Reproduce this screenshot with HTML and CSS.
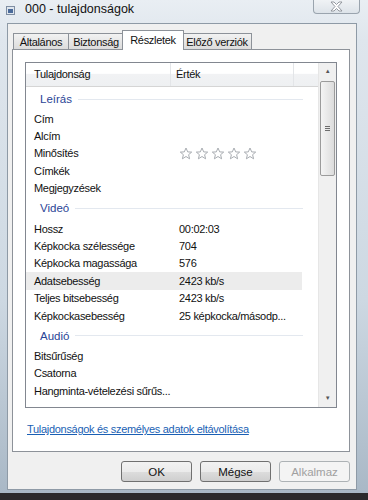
FILE: index.html
```html
<!DOCTYPE html>
<html lang="hu">
<head>
    <meta charset="UTF-8">
    <title>000 - tulajdonságok</title>
    <link rel="stylesheet" href="styles.css">
</head>
<body>
<div class="window">
    <!-- title bar -->
    <div class="titlebar">
        <svg class="appicon" width="9" height="9" viewBox="0 0 9 9">
            <rect x="0.5" y="0.5" width="8" height="8" fill="#dfe6ee" stroke="#7f8ea3"/>
            <rect x="2" y="3" width="5" height="4" fill="#4a6a9a"/>
        </svg>
        <span class="title">000 - tulajdonságok</span>
        <div class="close">
            <svg width="13" height="11" viewBox="0 0 13 11">
                <path d="M1 1 L4 1 L6.5 3.5 L9 1 L12 1 L8 5.5 L12 10 L9 10 L6.5 7.5 L4 10 L1 10 L5 5.5 Z" fill="#fff" stroke="#8a8f96" stroke-width="0.9"/>
            </svg>
        </div>
    </div>

    <div class="client">
        <!-- tabs -->
        <div class="tabs">
            <div class="tab t1">Általános</div>
            <div class="tab t2">Biztonság</div>
            <div class="tab t3 active">Részletek</div>
            <div class="tab t4">Előző verziók</div>
        </div>

        <div class="page">
            <div class="listview">
                <div class="listbody">
                    <div class="header">
                        <div class="hcol name">Tulajdonság</div>
                        <div class="hcol value">Érték</div>
                        <div class="hcol rest"></div>
                    </div>
                    <div class="rows">
                        <div class="group first"><span>Leírás</span></div>
                        <div class="row"><span class="name">Cím</span></div>
                        <div class="row"><span class="name">Alcím</span></div>
                        <div class="row"><span class="name">Minősítés</span>
                            <span class="value stars">
                                <svg width="82" height="13" viewBox="0 0 82 13">
                                    <g fill="#fff" stroke="#a9adb2" stroke-width="1">
                                        <path id="st" d="M7 1 L8.7 4.9 L12.7 5.1 L9.6 7.7 L10.6 11.8 L7 9.5 L3.4 11.8 L4.4 7.7 L1.3 5.1 L5.3 4.9 Z"/>
                                        <use href="#st" x="16"/>
                                        <use href="#st" x="32"/>
                                        <use href="#st" x="48"/>
                                        <use href="#st" x="64"/>
                                    </g>
                                </svg>
                            </span>
                        </div>
                        <div class="row"><span class="name">Címkék</span></div>
                        <div class="row"><span class="name">Megjegyzések</span></div>

                        <div class="group"><span>Videó</span></div>
                        <div class="row"><span class="name">Hossz</span><span class="value">00:02:03</span></div>
                        <div class="row"><span class="name">Képkocka szélessége</span><span class="value">704</span></div>
                        <div class="row"><span class="name">Képkocka magassága</span><span class="value">576</span></div>
                        <div class="row hot"><span class="name">Adatsebesség</span><span class="value">2423 kb/s</span></div>
                        <div class="row"><span class="name">Teljes bitsebesség</span><span class="value">2423 kb/s</span></div>
                        <div class="row"><span class="name">Képkockasebesség</span><span class="value">25 képkocka/másodp...</span></div>

                        <div class="group"><span>Audió</span></div>
                        <div class="row"><span class="name">Bitsűrűség</span></div>
                        <div class="row"><span class="name">Csatorna</span></div>
                        <div class="row"><span class="name">Hangminta-vételezési sűrűs...</span></div>
                    </div>
                </div>
                <div class="scrollbar">
                    <div class="arrow">&#9650;</div>
                    <div class="track">
                        <div class="thumb"><span class="grip"></span></div>
                    </div>
                    <div class="arrow">&#9660;</div>
                </div>
            </div>
            <a class="remove" href="#">Tulajdonságok és személyes adatok eltávolítása</a>
        </div>

        <div class="buttons">
            <button>OK</button>
            <button>Mégse</button>
            <button disabled>Alkalmaz</button>
        </div>
    </div>
</div>
</body>
</html>
```

FILE: styles.css
```css
body {
    margin: 0;
    font-family: "Liberation Sans", Arial, sans-serif;
    font-size: 11px;
    letter-spacing: -0.3px;
    background: #2b2a2c;
}

.window {
    width: 368px;
    height: 493px;
    box-sizing: border-box;
    padding: 0 11px 3px 7px;
    display: flex;
    flex-direction: column;
    background: linear-gradient(to bottom, #e9eef3 0px, #dfe6ed 40px, #cdd8e2 300px, #a9b8c6 493px);
}

/* title bar */
.titlebar {
    height: 23px;
    flex-shrink: 0;
    display: flex;
    align-items: flex-start;
    position: relative;
}
.appicon {
    margin: 6px 0 0 -1px;
}
.title {
    margin: 2px 0 0 10px;
    font-size: 12.5px;
    letter-spacing: 0;
    color: #111;
}
.close {
    position: absolute;
    right: -3px;
    top: -3px;
    width: 47px;
    height: 17px;
    box-sizing: border-box;
    border: 1px solid #9aa4ae;
    border-top: none;
    border-radius: 0 0 4px 4px;
    background: linear-gradient(to bottom, #f4f6f8, #dde3e9);
    display: flex;
    justify-content: center;
    align-items: center;
    padding-top: 2px;
}

/* client area */
.client {
    flex: 1;
    background: #f0f0f0;
    border: 1px solid #8e9aa6;
    display: flex;
    flex-direction: column;
    padding: 6px 6px 0 4px;
}

.tabs {
    display: flex;
    align-items: flex-end;
    height: 19px;
    margin-left: 1px;
    position: relative;
    z-index: 1;
}
.tab {
    height: 16px;
    line-height: 16px;
    box-sizing: border-box;
    text-align: center;
    border: 1px solid #8d9299;
    border-bottom: none;
    margin-right: -1px;
    background: linear-gradient(to bottom, #f2f2f2, #dcdcdc);
    color: #111;
}
.t1 { width: 56px; }
.t2 { width: 56px; }
.t3 { width: 62px; }
.t4 { width: 70px; }
.tab.active {
    height: 20px;
    line-height: 18px;
    margin: 0 -2px 0 -1px;
    background: #fff;
    position: relative;
    top: 1px;
}

.page {
    height: 403px;
    box-sizing: border-box;
    background: #fff;
    border: 1px solid #8d9299;
    padding: 12px 12px 0 12px;
    display: flex;
    flex-direction: column;
}

/* list view */
.listview {
    height: 346px;
    flex-shrink: 0;
    box-sizing: border-box;
    border: 1px solid #828790;
    display: flex;
    overflow: hidden;
}
.listbody {
    flex: 1;
    overflow: hidden;
}
.header {
    height: 23px;
    display: flex;
    background: linear-gradient(to bottom, #ffffff 0%, #ffffff 45%, #f1f2f4 50%, #eef0f2 100%);
    border-bottom: 1px solid #d5d5d5;
    color: #111;
}
.hcol {
    line-height: 23px;
    padding-left: 8px;
    border-right: 1px solid #e3e5e8;
}
.hcol.name { width: 136px; }
.hcol.value { width: 117px; padding-left: 5px; }
.hcol.rest { flex: 1; border-right: none; }

.rows {
    padding-top: 1px;
}
.group {
    height: 23px;
    display: flex;
    align-items: center;
    padding-left: 14px;
    margin-right: 15px;
    color: #2a4596;
    font-size: 11.5px;
    letter-spacing: 0;
}
.group.first { height: 22px; }
.group::after {
    content: "";
    flex: 1;
    height: 1px;
    margin-left: 6px;
    background: #e3e8ef;
}
.row {
    height: 17.4px;
    display: flex;
    align-items: center;
    padding-left: 8px;
    margin-right: 16px;
    color: #111;
    white-space: nowrap;
}
.row.hot {
    background: #ececec;
}
.row .name {
    width: 145px;
}
.row .value {
    flex: 1;
}
.stars svg {
    display: block;
}

/* scrollbar */
.scrollbar {
    width: 17px;
    display: flex;
    flex-direction: column;
    background: #f0f0f0;
    border-left: 1px solid #e6e6e6;
}
.arrow {
    height: 17px;
    text-align: center;
    font-size: 6px;
    line-height: 17px;
    color: #555;
}
.track {
    flex: 1;
    padding: 1px 1px;
}
.thumb {
    height: 93px;
    border: 1px solid #9b9b9b;
    border-radius: 2px;
    background: linear-gradient(to right, #f4f4f4, #dcdcdc);
    display: flex;
    align-items: center;
    justify-content: center;
}
.grip {
    width: 5px;
    height: 6px;
    background: repeating-linear-gradient(to bottom, #6d6d6d 0, #6d6d6d 1px, transparent 1px, transparent 2px);
}

.remove {
    margin: 15px 0 0 2px;
    color: #1a5fb4;
}

/* buttons */
.buttons {
    display: flex;
    justify-content: flex-end;
    gap: 8px;
    margin-top: 9px;
}
button {
    width: 71px;
    height: 21px;
    font-family: inherit;
    font-size: 11.5px;
    letter-spacing: 0;
    color: #111;
    border: 1px solid #707070;
    border-radius: 3px;
    background: linear-gradient(to bottom, #f2f2f2 0%, #ebebeb 50%, #dddddd 51%, #cfcfcf 100%);
}
button:disabled {
    color: #a0a0a0;
    border-color: #adb2b5;
    background: #f4f4f4;
}
```
